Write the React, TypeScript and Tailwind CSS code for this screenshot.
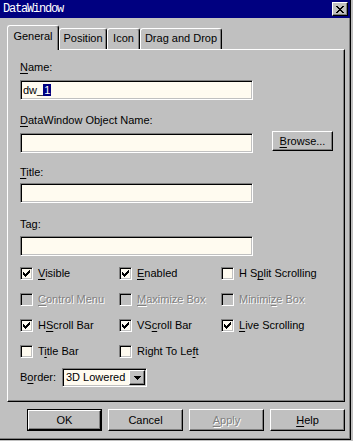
import React from 'react';

const sunken =
  'border border-t-[#808080] border-l-[#808080] border-b-white border-r-white shadow-[inset_1px_1px_0_#000,inset_-1px_-1px_0_#c0c0c0]';
const raised =
  'border border-t-white border-l-white border-b-black border-r-black shadow-[inset_-1px_-1px_0_#808080]';

const Mn: React.FC<{ text: string; at?: number }> = ({ text, at = -1 }) => {
  if (at < 0) return <>{text}</>;
  return (
    <>
      {text.slice(0, at)}
      <span className="underline decoration-1 underline-offset-[2px]">{text[at]}</span>
      {text.slice(at + 1)}
    </>
  );
};

const CloseGlyph = () => (
  <svg width="8" height="7" viewBox="0 0 8 7" shapeRendering="crispEdges">
    <path
      d="M0 0h2v1H0zM6 0h2v1H6zM1 1h2v1H1zM5 1h2v1H5zM2 2h4v1H2zM3 3h2v1H3zM2 4h4v1H2zM1 5h2v1H1zM5 5h2v1H5zM0 6h2v1H0zM6 6h2v1H6z"
      fill="#000"
    />
  </svg>
);

const CheckGlyph = () => (
  <svg width="7" height="7" viewBox="0 0 7 7" shapeRendering="crispEdges">
    <path
      d="M6 0h1v1H6zM5 1h2v1H5zM0 2h1v1H0zM4 2h3v1H4zM0 3h2v1H0zM3 3h3v1H3zM0 4h5v1H0zM1 5h3v1H1zM2 6h1v1H2z"
      fill="#000"
    />
  </svg>
);

const ArrowGlyph = () => (
  <svg width="7" height="4" viewBox="0 0 7 4" shapeRendering="crispEdges">
    <path d="M0 0h7v1H0zM1 1h5v1H1zM2 2h3v1H2zM3 3h1v1H3z" fill="#000" />
  </svg>
);

type Box = { label: string; at: number; checked?: boolean; disabled?: boolean };

const boxes: (Box | null)[] = [
  { label: 'Visible', at: 0, checked: true },
  { label: 'Enabled', at: 0, checked: true },
  { label: 'H Split Scrolling', at: 3 },
  { label: 'Control Menu', at: 0, disabled: true },
  { label: 'Maximize Box', at: 0, disabled: true },
  { label: 'Minimize Box', at: 6, disabled: true },
  { label: 'HScroll Bar', at: 1, checked: true },
  { label: 'VScroll Bar', at: 2, checked: true },
  { label: 'Live Scrolling', at: 0, checked: true },
  { label: 'Title Bar', at: 1 },
  { label: 'Right To Left', at: 11 },
  null,
];

const Field: React.FC<{ label: string; at: number; mt: string; gap: string; children?: React.ReactNode }> = ({
  label,
  at,
  mt,
  gap,
  children,
}) => (
  <div className={mt}>
    <div className="h-[13px] leading-[13px]">
      <Mn text={label} at={at} />
    </div>
    <div className={`flex items-start ${gap}`}>
      <div className={`h-[20px] w-[233px] bg-[#fffbf0] ${sunken} flex items-center pl-[2px]`}>{children}</div>
    </div>
  </div>
);

const Button: React.FC<{ label: string; at?: number; isDefault?: boolean; disabled?: boolean }> = ({
  label,
  at = -1,
  isDefault,
  disabled,
}) => (
  <div className={`h-[22px] w-[75px] ${isDefault ? 'border border-black' : ''}`}>
    <div
      className={`flex h-full w-full items-center justify-center ${raised} ${
        disabled ? 'text-[#808080] [text-shadow:1px_1px_0_#fff]' : ''
      }`}
    >
      <Mn text={label} at={at} />
    </div>
  </div>
);

const tabs = [
  { label: 'General', w: 'w-[52px]' },
  { label: 'Position', w: 'w-[48px]' },
  { label: 'Icon', w: 'w-[33px]' },
  { label: 'Drag and Drop', w: 'w-[82px]' },
];

export default function App() {
  return (
    <div className="h-[441px] w-[353px] overflow-hidden bg-[#c0c0c0] font-['Liberation_Sans',Arial,sans-serif] text-[11px] text-black">
      <div className="h-[440px] w-[351px] border-r border-b border-black shadow-[inset_-1px_-1px_0_#808080]">
        {/* title bar */}
        <div className="flex h-[18px] w-[350px] items-center justify-between bg-[#000080] pl-[3px] pr-[2px]">
          <span className="font-['Liberation_Mono',monospace] text-[12px] leading-[12px] tracking-[-1.2px] text-white">
            DataWindow
          </span>
          <div className={`flex h-[14px] w-[16px] items-center justify-center bg-[#c0c0c0] ${raised}`}>
            <CloseGlyph />
          </div>
        </div>

        {/* tabs */}
        <div className="relative z-10 mt-[7px] ml-[7px] flex h-[24px] items-end">
          {tabs.map((t, i) =>
            i === 0 ? (
              <div
                key={t.label}
                className={`${t.w} -mb-[1px] h-[25px] rounded-t-[3px] border-t border-l border-r border-t-white border-l-white border-r-black bg-[#c0c0c0] pt-[4px] text-center leading-[13px] shadow-[inset_-1px_0_0_#808080]`}
              >
                {t.label}
              </div>
            ) : (
              <div
                key={t.label}
                className={`${t.w} h-[21px] rounded-t-[3px] border-t border-l border-r border-t-white border-l-white border-r-black pt-[3px] text-center leading-[13px] shadow-[inset_-1px_0_0_#808080]`}
              >
                {t.label}
              </div>
            ),
          )}
        </div>

        {/* panel */}
        <div className="ml-[7px] h-[353px] w-[338px] border border-t-white border-l-white border-b-black border-r-black pl-[12px] pt-[11px] shadow-[inset_-1px_-1px_0_#808080]">
          <div className="h-[13px] leading-[13px]">
            <Mn text="Name:" at={0} />
          </div>
          <div className={`mt-[6px] flex h-[20px] w-[233px] items-center bg-[#fffbf0] pl-[2px] ${sunken}`}>
            <span className="leading-[13px]">dw_</span>
            <span className="bg-[#000080] px-[1px] leading-[12px] text-white">1</span>
          </div>

          <div className="mt-[14px] h-[13px] leading-[13px]">
            <Mn text="DataWindow Object Name:" at={0} />
          </div>
          <div className="mt-[6px] flex items-start">
            <div className={`h-[20px] w-[233px] bg-[#fffbf0] ${sunken}`} />
            <div className={`-mt-[2px] ml-[19px] flex h-[20px] w-[61px] items-center justify-center ${raised}`}>
              <Mn text="Browse..." at={0} />
            </div>
          </div>

          <div className="mt-[13px] h-[13px] leading-[13px]">
            <Mn text="Title:" at={0} />
          </div>
          <div className={`mt-[4px] h-[20px] w-[233px] bg-[#fffbf0] ${sunken}`} />

          <div className="mt-[15px] h-[13px] leading-[13px]">Tag:</div>
          <div className={`mt-[5px] h-[20px] w-[233px] bg-[#fffbf0] ${sunken}`} />

          {/* checkboxes */}
          <div className="mt-[11px] grid grid-cols-[99px_102px_1fr] gap-y-[13px]">
            {boxes.map((b, i) =>
              b ? (
                <div key={i} className="flex h-[13px] items-center">
                  <div
                    className={`flex h-[13px] w-[13px] shrink-0 items-center justify-center ${sunken} ${
                      b.disabled ? 'bg-[#c0c0c0]' : 'bg-[#fffbf0]'
                    }`}
                  >
                    {b.checked && <CheckGlyph />}
                  </div>
                  <span
                    className={`ml-[5px] whitespace-nowrap leading-[13px] ${
                      b.disabled ? 'text-[#808080] [text-shadow:1px_1px_0_#fff]' : ''
                    }`}
                  >
                    <Mn text={b.label} at={b.at} />
                  </span>
                </div>
              ) : (
                <div key={i} />
              ),
            )}
          </div>

          {/* border combo */}
          <div className="mt-[10px] flex items-center">
            <span className="w-[42px] leading-[13px]">
              <Mn text="Border:" at={1} />
            </span>
            <div className={`flex h-[19px] w-[85px] items-center bg-[#fffbf0] ${sunken}`}>
              <span className="flex-1 pl-[3px] leading-[13px]">3D Lowered</span>
              <div className={`mr-[1px] flex h-[15px] w-[16px] items-center justify-center bg-[#c0c0c0] ${raised}`}>
                <ArrowGlyph />
              </div>
            </div>
          </div>
        </div>

        {/* buttons */}
        <div className="mt-[7px] flex w-[345px] justify-end gap-[6px]">
          <Button label="OK" isDefault />
          <Button label="Cancel" />
          <Button label="Apply" at={0} disabled />
          <Button label="Help" at={0} />
        </div>
      </div>
    </div>
  );
}
